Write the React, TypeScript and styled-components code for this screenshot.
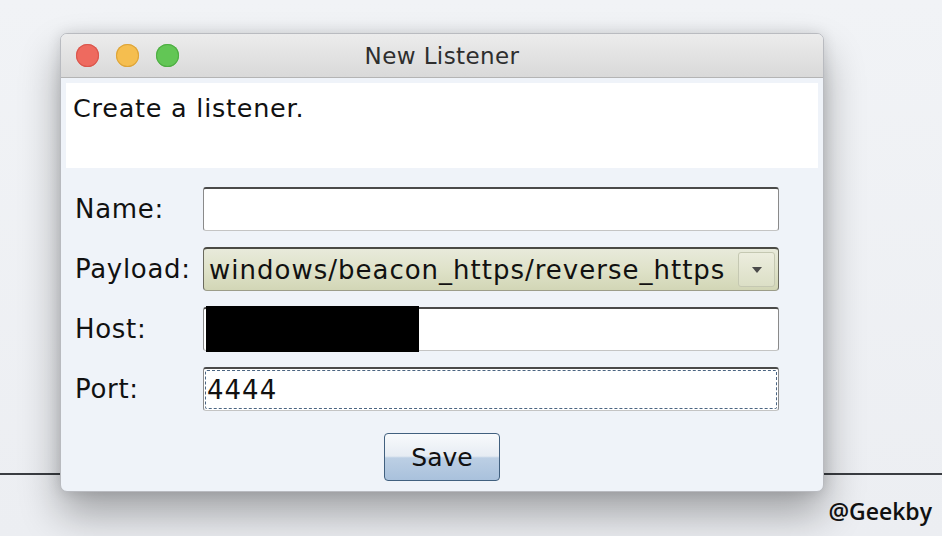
import styled, { createGlobalStyle } from "styled-components";

const GlobalStyle = createGlobalStyle`
  html, body {
    margin: 0;
    padding: 0;
  }
  body {
    background: #eef0f4;
    font-family: "DejaVu Sans", "Liberation Sans", sans-serif;
  }
`;

const Page = styled.div`
  position: relative;
  width: 942px;
  height: 536px;
  overflow: hidden;
  box-sizing: border-box;
  padding: 33px 0 0 60px;
  background: linear-gradient(180deg, #f1f3f6 0%, #eceef2 100%);
`;

const Rule = styled.div`
  position: absolute;
  left: 0;
  right: 0;
  top: 473px;
  height: 2px;
  background: #3a3d42;
`;

const Window = styled.div`
  position: relative;
  width: 764px;
  height: 459px;
  box-sizing: border-box;
  border: 1px solid #b9bbc0;
  border-radius: 7px;
  background: #eff3f9;
  overflow: hidden;
  box-shadow: 0 22px 40px rgba(0, 0, 0, 0.32), 0 0 14px rgba(0, 0, 0, 0.12);
  display: flex;
  flex-direction: column;
`;

const TitleBar = styled.div`
  height: 43px;
  flex-shrink: 0;
  display: flex;
  align-items: center;
  position: relative;
  padding-left: 15px;
  gap: 17px;
  background: linear-gradient(180deg, #ececec 0%, #d9d9d9 100%);
  border-bottom: 1px solid #b4b4b4;
`;

const Light = styled.span<{ $c: string; $b: string }>`
  width: 23px;
  height: 23px;
  border-radius: 50%;
  background: ${(p) => p.$c};
  box-shadow: inset 0 0 0 1px ${(p) => p.$b};
`;

const Title = styled.div`
  position: absolute;
  left: 0;
  right: 0;
  top: 9px;
  text-align: center;
  font-size: 23px;
  letter-spacing: 0.4px;
  color: #2e2e2e;
  pointer-events: none;
`;

const Body = styled.div`
  flex: 1;
  display: flex;
  flex-direction: column;
  padding: 5px 5px 0 5px;
`;

const Description = styled.div`
  height: 85px;
  background: #ffffff;
  box-sizing: border-box;
  padding: 10px 7px;
  font-size: 25.5px;
  letter-spacing: 0.75px;
  color: #111;
`;

const Form = styled.div`
  display: grid;
  grid-template-columns: 128px 576px;
  row-gap: 16px;
  margin: 19px 0 0 9px;
  align-items: center;
`;

const Label = styled.div`
  font-size: 26px;
  letter-spacing: 0.7px;
  color: #111;
`;

const Field = styled.div<{ $focus?: boolean }>`
  position: relative;
  height: 44px;
  box-sizing: border-box;
  background: #fff;
  border: 1.5px solid #8a8a8a;
  border-top: 2px solid #4a4a4a;
  border-bottom-color: #c4c4c4;
  border-radius: 3px;
  display: flex;
  align-items: center;
  padding: 0 3px;
  font-size: 26px;
  letter-spacing: 1px;
  color: #111;
  ${(p) =>
    p.$focus &&
    `&::after {
      content: "";
      position: absolute;
      inset: 1px;
      border: 1px dashed #4b6582;
      border-radius: 2px;
    }`}
`;

const Redact = styled.div`
  position: absolute;
  left: 2px;
  top: -3px;
  width: 213px;
  height: 46px;
  background: #000;
`;

const Combo = styled.div`
  height: 44px;
  box-sizing: border-box;
  border: 1.5px solid #6a6a5e;
  border-top: 2px solid #4a4a44;
  border-bottom-color: #9c9d8a;
  border-radius: 4px;
  background: linear-gradient(180deg, #e8eadb 0%, #dfe2c9 50%, #d2d6b6 100%);
  display: flex;
  align-items: center;
  padding: 0 3px 0 5px;
  font-size: 26px;
  letter-spacing: 1px;
  color: #111;
`;

const ComboText = styled.span`
  flex: 1;
  white-space: nowrap;
`;

const ArrowBtn = styled.div`
  width: 37px;
  height: 35px;
  box-sizing: border-box;
  border: 1px solid #c5c8b2;
  border-radius: 3px;
  background: linear-gradient(180deg, #ecedde 0%, #dcdfc6 100%);
  display: flex;
  align-items: center;
  justify-content: center;
`;

const Footer = styled.div`
  display: flex;
  justify-content: center;
  margin-top: 22px;
`;

const SaveButton = styled.button`
  width: 116px;
  height: 48px;
  box-sizing: border-box;
  border: 1.5px solid #41607f;
  border-radius: 4px;
  background: linear-gradient(
    180deg,
    #f8fafc 0%,
    #e6ecf3 48%,
    #bccfe4 52%,
    #a9c1dc 100%
  );
  font-family: "DejaVu Sans", "Liberation Sans", sans-serif;
  font-size: 25px;
  color: #111;
  padding: 0;
`;

const Credit = styled.div`
  position: absolute;
  right: 10px;
  bottom: 9px;
  font-size: 23px;
  font-weight: 600;
  color: #111;
  font-family: "Open Sans", "DejaVu Sans", sans-serif;
`;

export default function App() {
  return (
    <>
      <GlobalStyle />
      <Page>
        <Rule />
        <Window>
          <TitleBar>
            <Light $c="#ee6a5f" $b="#d9574d" />
            <Light $c="#f5be4f" $b="#dca43a" />
            <Light $c="#62c655" $b="#4ead43" />
            <Title>New Listener</Title>
          </TitleBar>
          <Body>
            <Description>Create a listener.</Description>
            <Form>
              <Label>Name:</Label>
              <Field />
              <Label>Payload:</Label>
              <Combo>
                <ComboText>windows/beacon_https/reverse_https</ComboText>
                <ArrowBtn>
                  <svg width="12" height="8" viewBox="0 0 12 8">
                    <path d="M1 1h10L6 7z" fill="#4a4a4a" />
                  </svg>
                </ArrowBtn>
              </Combo>
              <Label>Host:</Label>
              <Field>
                <Redact />
              </Field>
              <Label>Port:</Label>
              <Field $focus>4444</Field>
            </Form>
            <Footer>
              <SaveButton>Save</SaveButton>
            </Footer>
          </Body>
        </Window>
        <Credit>@Geekby</Credit>
      </Page>
    </>
  );
}
